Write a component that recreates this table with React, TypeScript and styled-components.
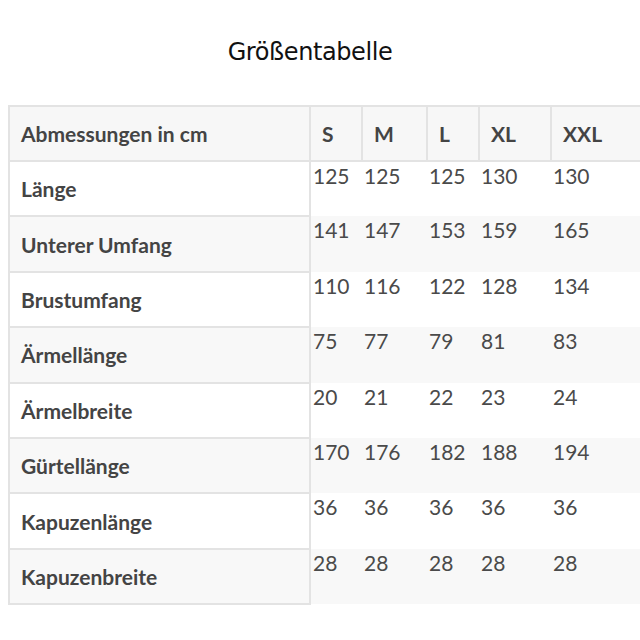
import styled, { createGlobalStyle } from "styled-components";

const GlobalStyle = createGlobalStyle`
  body {
    margin: 8px 0 8px 8px;
    background: #ffffff;
    overflow: hidden;
    font-family: Lato, "Open Sans", sans-serif;
  }
`;

const sizes = ["S", "M", "L", "XL", "XXL"];
const colWidths = [301, 52, 65, 52, 72, 90];

const rows: { label: string; values: number[] }[] = [
  { label: "Länge", values: [125, 125, 125, 130, 130] },
  { label: "Unterer Umfang", values: [141, 147, 153, 159, 165] },
  { label: "Brustumfang", values: [110, 116, 122, 128, 134] },
  { label: "Ärmellänge", values: [75, 77, 79, 81, 83] },
  { label: "Ärmelbreite", values: [20, 21, 22, 23, 24] },
  { label: "Gürtellänge", values: [170, 176, 182, 188, 194] },
  { label: "Kapuzenlänge", values: [36, 36, 36, 36, 36] },
  { label: "Kapuzenbreite", values: [28, 28, 28, 28, 28] },
];

const App = () => {
  return (
    <>
      <GlobalStyle />
      <Title>Größentabelle</Title>
      <SizeTable>
        <colgroup>
          {colWidths.map((w, i) => (
            <col key={i} style={{ width: w }} />
          ))}
        </colgroup>
        <thead>
          <tr>
            <HeadCell>Abmessungen in cm</HeadCell>
            {sizes.map((s, i) => (
              <HeadCell key={s} open={i === sizes.length - 1}>
                {s}
              </HeadCell>
            ))}
          </tr>
        </thead>
        <tbody>
          {rows.map((row, i) => (
            <Row key={row.label} shaded={i % 2 === 1}>
              <LabelCell>{row.label}</LabelCell>
              {row.values.map((v, j) => (
                <ValueCell key={j}>{v}</ValueCell>
              ))}
            </Row>
          ))}
        </tbody>
      </SizeTable>
    </>
  );
};
export default App;

const Title = styled.h1`
  margin: 0;
  padding: 30px 28px 0 0;
  height: 97px;
  box-sizing: border-box;
  text-align: center;
  font-family: "DejaVu Sans", Verdana, sans-serif;
  font-weight: 400;
  font-size: 24px;
  color: #111111;
  letter-spacing: -0.4px;
`;

const SizeTable = styled.table`
  border-collapse: collapse;
  table-layout: fixed;
  width: 632px;
  color: #444444;
`;

const HeadCell = styled.th<{ open?: boolean }>`
  height: 55px;
  box-sizing: border-box;
  padding: 0 11px;
  border: 2px solid #e3e3e3;
  border-right-color: ${({ open }) => (open ? "transparent" : "#e3e3e3")};
  background: #f7f7f7;
  text-align: left;
  font-size: 21px;
  font-weight: 700;
  vertical-align: middle;
  white-space: nowrap;
`;

const Row = styled.tr<{ shaded: boolean }>`
  background: ${({ shaded }) => (shaded ? "#f8f8f8" : "#ffffff")};
`;

const LabelCell = styled.td`
  height: 55.4px;
  box-sizing: border-box;
  padding: 0 11px;
  border: 2px solid #e3e3e3;
  font-size: 21px;
  font-weight: 700;
  vertical-align: middle;
  white-space: nowrap;
`;

const ValueCell = styled.td`
  padding: 0 2px;
  font-size: 21px;
  font-weight: 400;
  color: #4a4a4a;
  vertical-align: top;
  line-height: 28px;
`;
